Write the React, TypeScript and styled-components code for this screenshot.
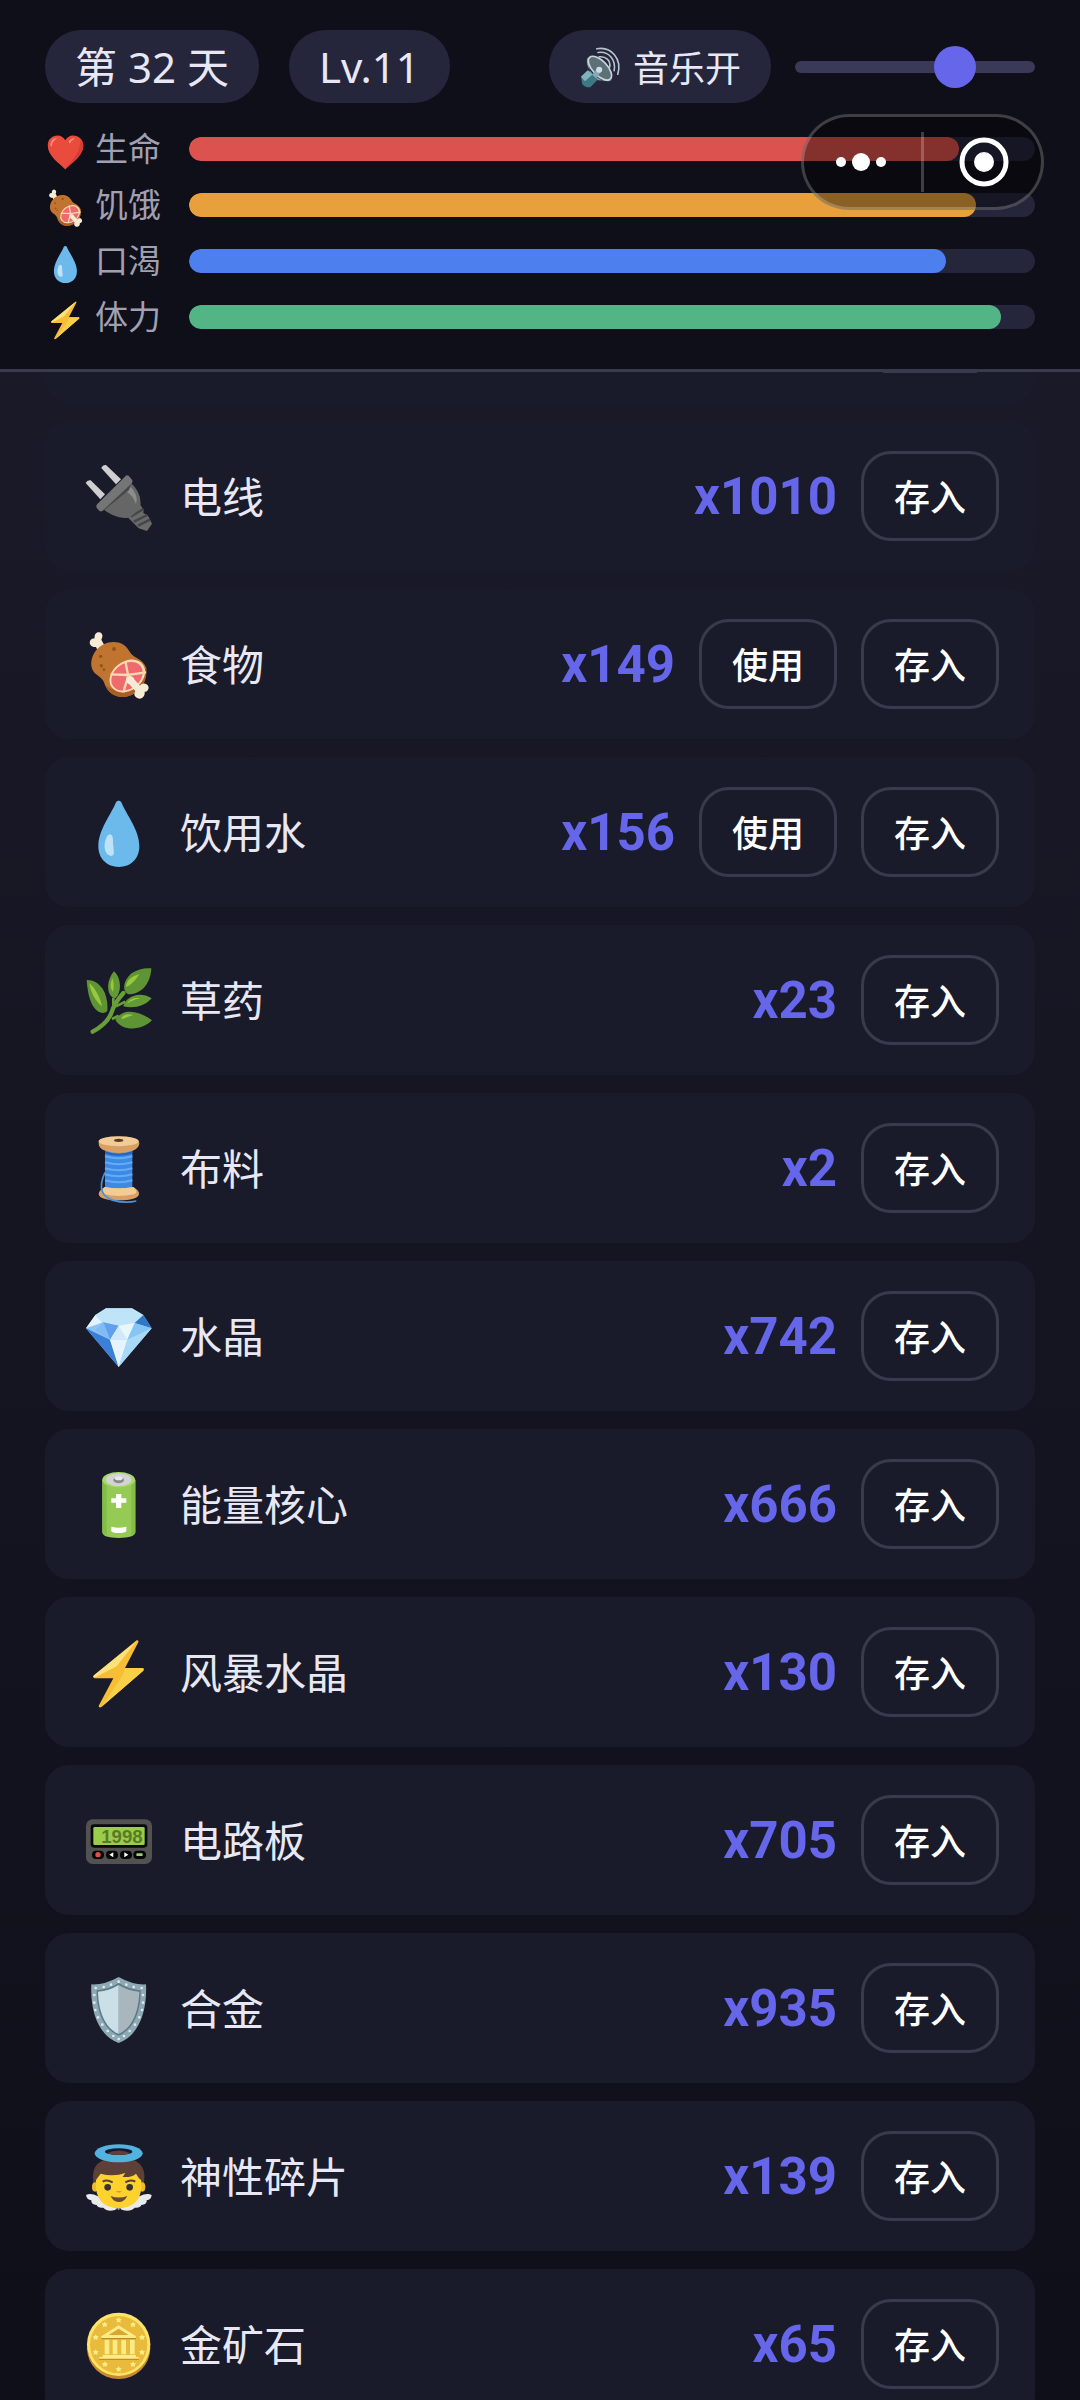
import React, { useState } from "react";
import styled, { createGlobalStyle } from "styled-components";

type IconName =
  | "heart"
  | "meat"
  | "drop"
  | "bolt"
  | "speaker"
  | "plug"
  | "herb"
  | "thread"
  | "gem"
  | "battery"
  | "pager"
  | "shield"
  | "angel"
  | "coin";

interface Stat {
  icon: IconName;
  label: string;
  value: number;
  color: string;
}

interface Item {
  icon: IconName;
  name: string;
  amount: number;
  usable?: boolean;
}

const stats: Stat[] = [
  { icon: "heart", label: "生命", value: 91, color: "#dc524e" },
  { icon: "meat", label: "饥饿", value: 93, color: "#e8a03c" },
  { icon: "drop", label: "口渴", value: 89.5, color: "#4d80ee" },
  { icon: "bolt", label: "体力", value: 96, color: "#53b585" },
];

const items: Item[] = [
  { icon: "plug", name: "电线", amount: 1010 },
  { icon: "meat", name: "食物", amount: 149, usable: true },
  { icon: "drop", name: "饮用水", amount: 156, usable: true },
  { icon: "herb", name: "草药", amount: 23 },
  { icon: "thread", name: "布料", amount: 2 },
  { icon: "gem", name: "水晶", amount: 742 },
  { icon: "battery", name: "能量核心", amount: 666 },
  { icon: "bolt", name: "风暴水晶", amount: 130 },
  { icon: "pager", name: "电路板", amount: 705 },
  { icon: "shield", name: "合金", amount: 935 },
  { icon: "angel", name: "神性碎片", amount: 139 },
  { icon: "coin", name: "金矿石", amount: 65 },
];

const rivets = [
  [98, 14], [75, 23], [53, 30], [29, 33], [25, 54], [25, 77], [28, 99],
  [36, 121], [49, 143], [65, 162], [82, 177], [121, 23], [143, 30],
  [167, 33], [171, 54], [171, 77], [168, 99], [160, 121], [147, 143],
  [131, 162], [114, 177], [98, 186],
];

const stars = [
  [98, 20], [56, 34], [141, 34], [29, 72], [168, 72], [29, 117], [168, 117],
  [57, 153], [141, 153], [98, 168],
];

const drawings: Record<IconName, React.ReactNode> = {
  heart: (
    <>
      <path
        d="M98 190C70 160 4 120 4 62C4 28 28 8 56 8C76 8 91 19 98 34C105 19 120 8 140 8C168 8 194 28 194 62C194 120 126 160 98 190Z"
        fill="#e94b3c"
      />
      <path d="M18 62C18 36 34 20 54 22C38 34 30 46 24 68Z" fill="#ff8a76" />
      <path d="M116 42C122 26 136 20 148 24C138 32 128 40 122 52Z" fill="#ff8a76" />
      <path d="M194 62C194 120 126 160 98 190C110 158 174 128 180 30C190 38 194 50 194 62Z" fill="#d83c35" />
    </>
  ),
  meat: (
    <>
      <path
        d="M34 50L30 42C18 44 8 34 12 24C14 18 22 16 26 16C24 4 32 -4 40 -2C50 0 52 10 46 20L58 42Z"
        fill="#f6ebd5"
      />
      <path
        d="M16 98C14 62 40 28 82 27C110 27 122 40 132 58C140 74 172 78 180 104C188 150 154 192 106 192C78 190 62 174 54 148C46 126 20 128 16 98Z"
        fill="#c07430"
      />
      <path
        d="M180 98C188 146 154 192 106 192C82 190 66 176 58 156C90 186 168 176 180 98Z"
        fill="#a85f26"
      />
      <ellipse cx="124" cy="129" rx="58" ry="44" fill="#fbd9b4" transform="rotate(-36 124 129)" />
      <ellipse cx="123" cy="130" rx="51" ry="38" fill="#ef6a6c" transform="rotate(-36 123 130)" />
      <path
        d="M118 84L126 126L180 118M126 126L74 124M126 130L112 178"
        stroke="#fbd9b4"
        strokeWidth="7"
        fill="none"
      />
      <path
        d="M122 134C130 124 142 130 146 140L162 158C166 150 182 148 187 160C190 168 184 178 176 176C178 190 166 200 156 196C146 192 142 184 148 174L130 154C122 150 118 142 122 134Z"
        fill="#f6ebd5"
      />
      <circle cx="84" cy="48" r="6" fill="#93531f" />
      <circle cx="44" cy="70" r="5" fill="#93531f" />
      <circle cx="46" cy="98" r="5" fill="#93531f" />
      <circle cx="54" cy="110" r="4" fill="#93531f" />
    </>
  ),
  drop: (
    <>
      <path
        d="M90 4C94 -2 102 -2 106 4C120 40 160 86 160 136C160 174 134 198 99 198C64 198 37 174 37 136C37 86 76 40 90 4Z"
        fill="#6cb9ec"
      />
      <path
        d="M72 100C84 102 80 122 82 136C84 152 86 164 76 165C62 164 54 148 56 130C58 114 64 100 72 100Z"
        fill="#bfe2f7"
      />
    </>
  ),
  bolt: (
    <>
      <path
        d="M152 -2C156 -4 159 0 157 4L117 81H170C174 82 174 87 171 90L46 198C41 201 36 198 39 193L82 112H26C21 111 21 106 24 103Z"
        fill="#f5be34"
      />
      <path d="M152 0L92 76L30 108H26C21 111 21 106 24 103Z" fill="#fde27a" />
      <path d="M117 81H170C174 82 174 87 171 90L46 198L112 100Z" fill="#f9cf48" />
    </>
  ),
  speaker: (
    <>
      <path d="M0 142L34 110L86 154L46 194Q22 198 6 178Z" fill="#3f7884" />
      <path d="M0 142L34 110L58 130L20 164Z" fill="#7fb3bd" />
      <path d="M36 44C20 60 30 108 72 140C110 170 146 170 152 156L84 160L44 118Z" fill="#7e9aa3" />
      <ellipse cx="94" cy="100" rx="74" ry="36" fill="#5c7078" stroke="#c9d6dc" strokeWidth="8" transform="rotate(46 94 100)" />
      <path d="M56 132L84 96L100 116L74 148Z" fill="#86aab3" />
      <circle cx="90" cy="108" r="15" fill="#c9dde3" />
      <path
        d="M90 44C122 40 148 62 142 94M84 22C136 14 174 56 164 112M78 4C150 -10 204 54 182 130"
        fill="none"
        stroke="#b8c4cc"
        strokeWidth="8"
        strokeLinecap="round"
      />
    </>
  ),
  plug: (
    <>
      <path d="M46 9Q50 -1 60 0L105 43L90 58Z" fill="#cfcfcf" />
      <path d="M-1 54Q4 44 14 46L57 88L43 103Z" fill="#cfcfcf" />
      <path d="M128 128L163 120L173 134L172 144L186 152L198 176L183 198L158 190L128 160Z" fill="#6a6a6a" />
      <path d="M134 155L172 132M144 170L184 150M156 182L192 164" stroke="#454545" strokeWidth="7" />
      <path d="M128 48Q168 80 163 122Q148 148 128 158Q88 164 48 130Z" fill="#666" />
      <path d="M135 66Q158 92 150 118Q142 92 122 80Z" fill="#8c8c8c" />
      <path d="M116 36Q120 28 128 32L138 44Q142 50 136 56L50 137Q44 142 38 136L32 128Q29 123 34 117Z" fill="#757575" />
      <path d="M136 56L50 137L56 134L128 76Z" fill="#484848" />
    </>
  ),
  herb: (
    <>
      <path d="M20 188Q64 164 76 132Q84 104 112 72" fill="none" stroke="#689f38" strokeWidth="13" strokeLinecap="round" />
      <path d="M78 150L98 140M90 112L118 98M82 86V108" stroke="#689f38" strokeWidth="8" />
      <path d="M2 33C40 32 68 70 64 126C52 138 32 132 18 106C8 86 4 60 2 33Z" fill="#5f9435" />
      <path d="M84 7C106 26 108 70 88 88C62 84 58 38 84 7Z" fill="#649a35" />
      <path d="M196 -2C194 44 166 76 128 76C106 68 112 32 138 12C156 0 176 -4 196 -2Z" fill="#5f9435" />
      <path d="M197 88C176 112 142 120 112 112C118 84 160 64 197 88Z" fill="#649a35" />
      <path d="M198 154C170 184 110 190 88 152C110 116 160 124 198 154Z" fill="#5f9435" />
      <path
        d="M10 42C30 60 44 88 48 112C30 98 14 72 10 42ZM80 28C84 44 84 60 80 68C72 58 72 42 80 28ZM160 16C146 38 132 50 120 54C120 36 138 20 160 16ZM162 88C144 92 132 98 124 104C128 92 144 84 162 88ZM142 138C126 142 114 150 106 150C108 138 124 132 142 138Z"
        fill="#97c93d"
      />
    </>
  ),
  thread: (
    <>
      <path d="M57 40H139V156H57Z" fill="#3b8be6" />
      <path
        d="M57 58Q98 70 139 58M57 76Q98 88 139 76M57 94Q98 106 139 94M57 112Q98 124 139 112M57 130Q98 142 139 130"
        stroke="#68aaf2"
        strokeWidth="6"
        fill="none"
      />
      <path d="M57 42Q98 60 139 42V50Q98 62 57 50Z" fill="#2a62b5" />
      <path d="M38 20Q36 -2 98 -1Q160 -2 160 20Q158 34 138 42Q98 54 60 42Q38 34 38 20Z" fill="#d9a066" />
      <ellipse cx="98" cy="13" rx="60" ry="15" fill="#f3cb94" />
      <ellipse cx="98" cy="10" rx="14" ry="5" fill="#5d3b22" />
      <path d="M56 150Q98 158 142 150Q160 160 159 172Q154 190 98 190Q42 190 38 172Q38 160 56 150Z" fill="#d9a066" />
      <path d="M56 150Q98 158 142 150Q160 166 144 172Q98 182 54 172Q42 162 56 150Z" fill="#f3cb94" />
      <path d="M57 106C34 156 50 180 82 190Q118 200 151 192" fill="none" stroke="#4b92dd" strokeWidth="5" />
    </>
  ),
  gem: (
    <>
      <path d="M60 10H138L172 30L197 70L98 186L0 70L28 30Z" fill="#9bd0f5" />
      <path d="M60 10H138L172 30L146 56L98 62L42 50L28 30Z" fill="#bfe4f8" />
      <path d="M28 30L52 58L0 70Z" fill="#e2f3fc" />
      <path d="M0 70L52 52L72 104Z" fill="#8cc3f6" />
      <path d="M52 52L98 62L72 104Z" fill="#5f9feb" />
      <path d="M52 52L28 76L72 104Z" fill="#82baf5" />
      <path d="M98 62L146 54L124 104H72Z" fill="#cde9fb" />
      <path d="M98 62L146 54L124 104Z" fill="#e8f6fd" />
      <path d="M146 54L172 30L197 70Z" fill="#2e78c7" />
      <path d="M146 54L197 70L124 104Z" fill="#86c5f4" />
      <path d="M0 70L72 104L98 186Z" fill="#3b7fd6" />
      <path d="M72 104H124L98 186Z" fill="#e6f5fd" />
      <path d="M124 104L197 70L98 186Z" fill="#a9d9f7" />
    </>
  ),
  battery: (
    <>
      <path d="M49 20H148V178Q146 195 98 195Q50 195 49 178Z" fill="#95cb55" />
      <path d="M49 20H62V186Q50 182 49 176ZM136 20H148V178Q146 184 136 188Z" fill="#83bd47" />
      <ellipse cx="98" cy="20" rx="49" ry="23" fill="#a8d86c" />
      <ellipse cx="98" cy="20" rx="38" ry="19" fill="#d3d3d6" />
      <ellipse cx="98" cy="21" rx="16" ry="10" fill="#88888d" />
      <ellipse cx="98" cy="16" rx="12" ry="6" fill="#e9e9ec" />
      <path d="M90 63H106V76H121V89H106V105H90V89H76V76H90Z" fill="#fff" />
      <path d="M76 161Q98 167 121 161V174Q118 180 98 180Q78 180 76 174Z" fill="#fff" />
    </>
  ),
  pager: (
    <>
      <rect x="0" y="31" width="198" height="134" rx="20" fill="#525252" />
      <rect x="14" y="46" width="170" height="70" rx="10" fill="#0a0a0a" />
      <rect x="22" y="54" width="154" height="54" rx="4" fill="#9ccc4c" />
      <text x="170" y="101" textAnchor="end" fontSize="56" fontWeight="700" fontFamily="Liberation Sans" fill="#597a2a">
        1998
      </text>
      <rect x="18" y="125" width="36" height="25" rx="12" fill="#050505" />
      <rect x="60" y="125" width="36" height="25" rx="12" fill="#050505" />
      <rect x="102" y="125" width="36" height="25" rx="12" fill="#050505" />
      <rect x="142" y="125" width="38" height="25" rx="12" fill="#050505" />
      <circle cx="36" cy="137" r="8" fill="#e0503f" />
      <path d="M82 130V145L70 137Z" fill="#fff" />
      <path d="M115 130V145L127 137Z" fill="#fff" />
      <rect x="151" y="133" width="19" height="8" rx="2" fill="#a3c878" />
    </>
  ),
  shield: (
    <>
      <path
        d="M98 0Q140 24 180 22C184 100 160 176 98 198C36 176 12 100 16 22Q56 24 98 0Z"
        fill="#8fa9b4"
      />
      <path d="M98 18Q130 38 164 40C164 100 146 156 98 176C50 156 32 100 32 40Q66 38 98 18Z" fill="#5a7a87" />
      <path d="M98 24Q128 42 160 44C158 100 142 150 98 171Z" fill="#a9b6be" />
      <path d="M98 24Q68 42 36 44C38 100 54 150 98 171Z" fill="#cbe0e6" />
      {rivets.map(([x, y]) => (
        <circle key={`${x}-${y}`} cx={x} cy={y} r="4" fill="#dcebf0" />
      ))}
    </>
  ),
  angel: (
    <>
      <path
        d="M0 150Q14 142 36 154L98 194L160 154Q184 142 197 150Q196 164 182 166Q184 178 166 180Q162 190 146 188Q136 200 112 196L98 190L84 196Q62 200 52 188Q36 190 32 180Q14 178 16 166Q2 164 0 150Z"
        fill="#e9e9ee"
      />
      <path d="M22 110Q10 40 98 36Q186 40 174 110L166 130H30Z" fill="#5d4037" />
      <ellipse cx="27" cy="126" rx="9" ry="14" fill="#f0b92c" />
      <ellipse cx="169" cy="126" rx="9" ry="14" fill="#f0b92c" />
      <path d="M30 100Q40 70 98 68Q156 70 166 100V130Q160 188 98 190Q36 188 30 130Z" fill="#fdd22d" />
      <path d="M28 108Q24 50 98 50Q172 50 168 108Q156 98 150 86Q138 98 110 96L118 84Q82 96 44 86Q36 96 28 108Z" fill="#5d4037" />
      <ellipse cx="98" cy="25" rx="72" ry="27" fill="#52b3e0" />
      <ellipse cx="98" cy="20" rx="41" ry="10" fill="#1a1b2a" />
      <path d="M62 25Q98 8 134 25Q98 35 62 25Z" fill="#5d4037" />
      <path d="M50 110Q62 102 80 112M118 112Q134 102 148 110" stroke="#5d4037" strokeWidth="6" fill="none" />
      <circle cx="65" cy="127" r="10" fill="#38332f" />
      <circle cx="131" cy="127" r="10" fill="#38332f" />
      <path d="M90 138H108Q99 148 90 138Z" fill="#e59a1d" />
      <path d="M74 153Q98 162 124 153Q114 172 98 171Q80 170 74 153Z" fill="#6b4a36" />
    </>
  ),
  coin: (
    <>
      <ellipse cx="98" cy="106" rx="95" ry="92" fill="#c98a2c" />
      <circle cx="98" cy="94" r="95" fill="#fde469" />
      <circle cx="98" cy="95" r="86" fill="#e9bb3c" />
      <path
        d="M46 76V70L98 37L150 70V76ZM56 80H70V124H56ZM80 80H94V124H80ZM106 80H120V124H106ZM132 80H146V124H132ZM50 126H150V132H158V138H40V132H50Z"
        fill="#fdec86"
      />
      <path d="M40 139H158M46 77H150" stroke="#c08a24" strokeWidth="4" />
      <path d="M68 66L98 47L128 66Z" fill="#d9a632" />
      {stars.map(([x, y]) => (
        <path
          key={`${x}-${y}`}
          d={`M${x} ${y - 8}l3 5 6 1-4 5 1 6-6-3-6 3 1-6-4-5 6-1z`}
          fill="#fdec86"
        />
      ))}
    </>
  ),
};

interface IconProps {
  name: IconName;
  size: number;
}

const Icon: React.FC<IconProps> = ({ name, size }) => (
  <Svg width={size} height={size} viewBox="0 0 198 198" aria-hidden="true">
    {drawings[name]}
  </Svg>
);

const App: React.FC = () => {
  const [volume, setVolume] = useState<number>(70);

  return (
    <>
      <GlobalStyle />
      <Screen>
        <Header>
          <TopBar>
            <Group $gap={30}>
              <Pill>第 32 天</Pill>
              <Pill>Lv.11</Pill>
            </Group>
            <Group $gap={24}>
              <MusicButton type="button">
                <IconBox $size={45}>
                  <Icon name="speaker" size={40} />
                </IconBox>
                音乐开
              </MusicButton>
              <Volume
                type="range"
                min={0}
                max={100}
                value={volume}
                aria-label="音量"
                onChange={(e) => setVolume(Number(e.target.value))}
              />
            </Group>
          </TopBar>

          <Stats>
            {stats.map((stat) => (
              <StatRow key={stat.label}>
                <StatLabel>
                  <IconBox $size={41}>
                    <Icon name={stat.icon} size={37} />
                  </IconBox>
                  {stat.label}
                </StatLabel>
                <Bar role="progressbar" aria-label={stat.label} aria-valuenow={stat.value}>
                  <Fill $color={stat.color} style={{ width: `${stat.value}%` }} />
                </Bar>
              </StatRow>
            ))}
          </Stats>
        </Header>

        <List>
          <PassedCard>
            <PassedButton />
          </PassedCard>
          {items.map((item) => (
            <Card key={item.name}>
              <IconBox $size={75}>
                <Icon name={item.icon} size={66} />
              </IconBox>
              <Name>{item.name}</Name>
              <Amount>x{item.amount}</Amount>
              {item.usable && <Button type="button">使用</Button>}
              <Button type="button">存入</Button>
            </Card>
          ))}
        </List>

        <Capsule>
          <CapsuleButton type="button" aria-label="更多">
            <svg width="50" height="50" viewBox="2 0 50 50" fill="#fff">
              <circle cx="5" cy="25" r="5" />
              <circle cx="25" cy="25" r="9" />
              <circle cx="45" cy="25" r="5" />
            </svg>
          </CapsuleButton>
          <Divider />
          <CapsuleButton type="button" aria-label="关闭">
            <svg width="50" height="50" viewBox="-1 0 50 50">
              <circle cx="25" cy="25" r="22" fill="none" stroke="#fff" strokeWidth="5" />
              <circle cx="25" cy="25" r="10" fill="#fff" />
            </svg>
          </CapsuleButton>
        </Capsule>
      </Screen>
    </>
  );
};
export default App;

const GlobalStyle = createGlobalStyle`
  * {
    box-sizing: border-box;
  }
  body {
    margin: 0;
    background-color: #0f0f1a;
  }
  body, button {
    font-family: Roboto, "Noto Sans CJK SC", sans-serif;
  }
  svg {
    overflow: visible;
  }
`;

const Screen = styled.div`
  position: relative;
  height: 100vh;
  display: flex;
  flex-direction: column;
  background: linear-gradient(180deg, #1a192b 0%, #191927 20%, #0f0f1a 100%);
  color: #e8e8f5;
`;

const Header = styled.header`
  flex-shrink: 0;
  padding: 30px 45px;
  background-color: #0f0f19;
  border-bottom: 3px solid #3a3a4e;
`;

const TopBar = styled.div`
  display: flex;
  align-items: center;
  justify-content: space-between;
  margin-bottom: 24px;
`;

const Group = styled.div<{ $gap: number }>`
  display: flex;
  align-items: center;
  gap: ${({ $gap }) => $gap}px;
`;

const Pill = styled.div`
  height: 73px;
  padding: 0 30px;
  border-radius: 36px;
  background-color: #25253c;
  font-family: "Noto Sans", "Noto Sans CJK SC", sans-serif;
  font-size: 42px;
  line-height: 73px;
  white-space: nowrap;
`;

const MusicButton = styled.button`
  height: 73px;
  padding: 0 30px 2px;
  display: flex;
  align-items: center;
  gap: 9px;
  border: none;
  border-radius: 36px;
  background-color: #25253c;
  color: #e8e8f5;
  font-size: 36px;
  cursor: pointer;
`;

const Volume = styled.input`
  appearance: none;
  width: 240px;
  height: 12px;
  margin: 0;
  border-radius: 6px;
  background-color: #3a3a58;

  &::-webkit-slider-thumb {
    appearance: none;
    width: 42px;
    height: 42px;
    border-radius: 50%;
    background-color: #6666eb;
  }
`;

const Stats = styled.div`
  display: flex;
  flex-direction: column;
  gap: 12px;
`;

const StatRow = styled.div`
  height: 44px;
  display: flex;
  align-items: center;
  gap: 24px;
`;

const StatLabel = styled.div`
  width: 120px;
  padding-top: 2px;
  display: flex;
  align-items: center;
  gap: 9px;
  color: #a0a0b2;
  font-size: 33px;
  line-height: 44px;
  white-space: nowrap;
`;

const Bar = styled.div`
  flex: 1;
  height: 24px;
  border-radius: 12px;
  background-color: #25253c;
  overflow: hidden;
`;

const Fill = styled.div<{ $color: string }>`
  height: 100%;
  border-radius: 12px;
  background-color: ${({ $color }) => $color};
`;

const IconBox = styled.span<{ $size: number }>`
  width: ${({ $size }) => $size}px;
  flex-shrink: 0;
  display: flex;
  justify-content: center;
  padding-top: 4px;
`;

const Svg = styled.svg`
  display: block;
`;

const List = styled.main`
  flex: 1;
  min-height: 0;
  padding: 0 45px;
  display: flex;
  flex-direction: column;
  gap: 18px;
  overflow-y: auto;
  scrollbar-width: none;
`;

const Card = styled.div`
  height: 150px;
  flex-shrink: 0;
  padding: 0 36px;
  display: flex;
  align-items: center;
  gap: 24px;
  border-radius: 24px;
  background-color: #1a1b2a;
`;

// Lower edge of the card that has scrolled under the header
const PassedCard = styled.div`
  height: 31px;
  flex-shrink: 0;
  padding: 0 58px;
  display: flex;
  justify-content: flex-end;
  border-radius: 0 0 24px 24px;
  background-color: #1a1b2a;
`;

const PassedButton = styled.div`
  width: 94px;
  height: 1px;
  background-color: #3a3a4e;
`;

const Name = styled.span`
  flex: 1;
  padding-bottom: 4px;
  font-size: 42px;
`;

const Amount = styled.span`
  color: #6666eb;
  font-size: 51px;
  font-weight: 700;
`;

const Button = styled.button`
  width: 138px;
  height: 90px;
  padding: 0 0 3px;
  border: 3px solid #3a3a4e;
  border-radius: 30px;
  background: none;
  color: #fff;
  font-size: 36px;
  font-weight: 500;
  cursor: pointer;
`;

// Floats over the header, like the host app's own controls
const Capsule = styled.div`
  position: absolute;
  top: 114px;
  right: 36px;
  width: 243px;
  height: 96px;
  display: flex;
  align-items: center;
  border: 3px solid rgba(255, 255, 255, 0.22);
  border-radius: 48px;
  background-color: rgba(0, 0, 0, 0.4);
`;

const CapsuleButton = styled.button`
  flex: 1;
  height: 90px;
  padding: 0;
  display: flex;
  align-items: center;
  justify-content: center;
  border: none;
  background: none;
  cursor: pointer;
`;

const Divider = styled.div`
  width: 3px;
  height: 60px;
  background-color: rgba(255, 255, 255, 0.22);
`;
